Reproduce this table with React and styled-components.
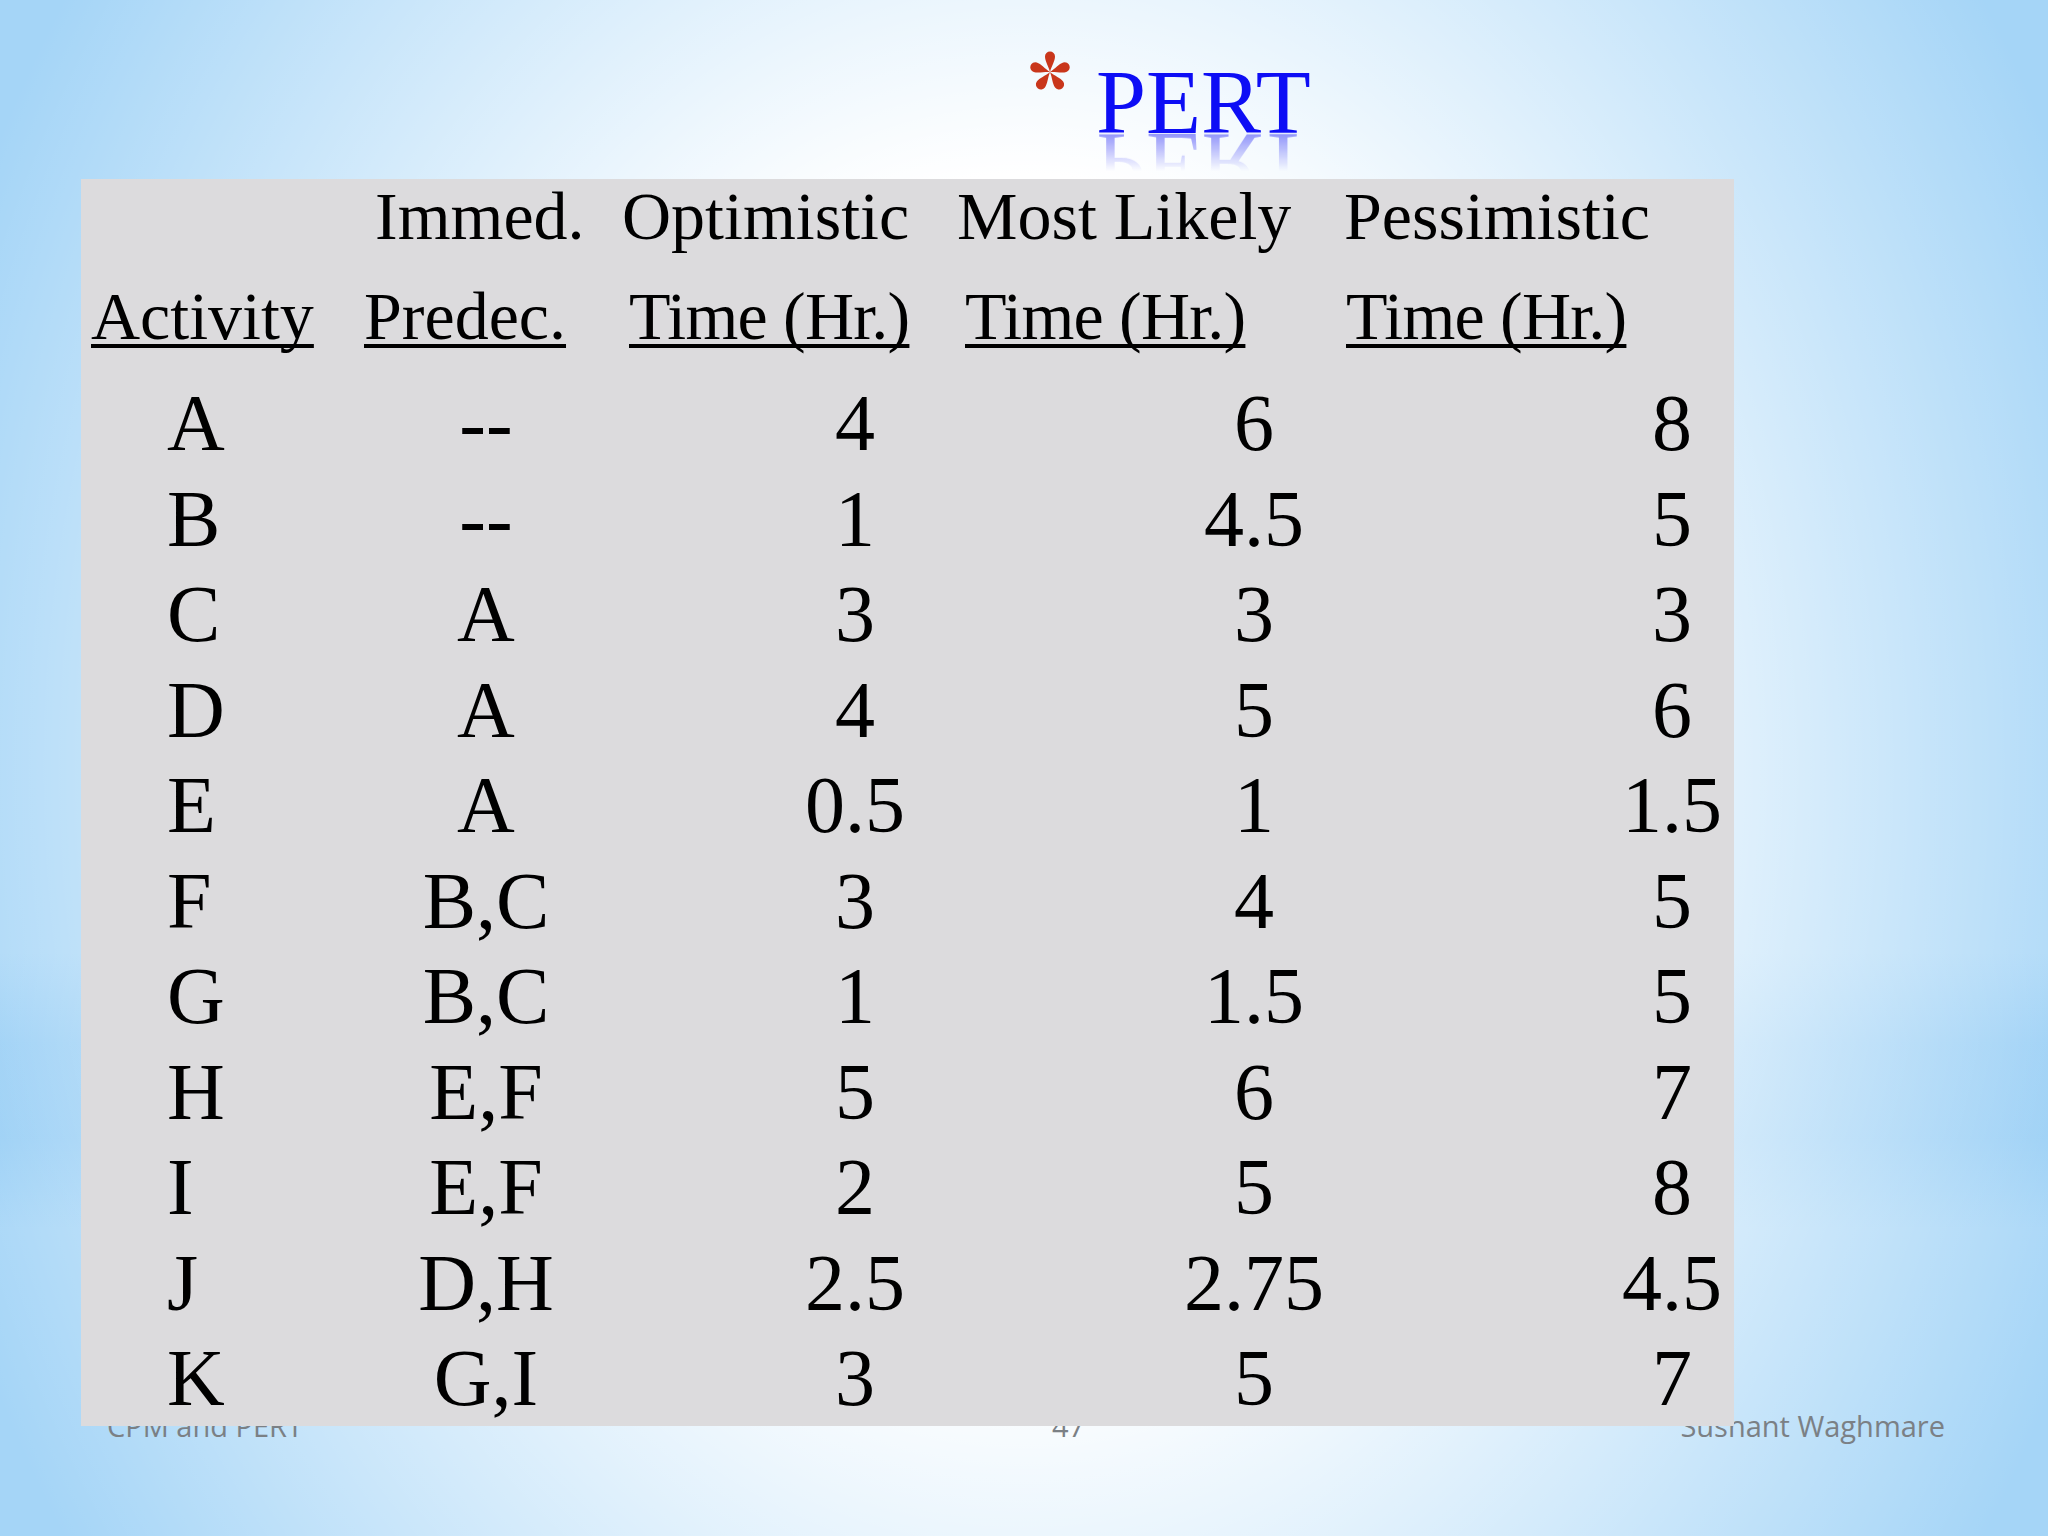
import React from 'react'
import styled, { createGlobalStyle } from 'styled-components'

const GlobalStyle = createGlobalStyle`
  html, body {
    margin: 0;
    padding: 0;
    overflow: hidden;
  }
`

const Slide = styled.div`
  width: 2048px;
  height: 1536px;
  display: flex;
  flex-direction: column;
  overflow: hidden;
  background:
    radial-gradient(ellipse 56% 92% at 50% 50%, #ffffff 42%, rgba(255, 255, 255, 0) 100%),
    linear-gradient(to bottom, rgba(255, 255, 255, 0) 62%, rgba(110, 185, 240, 0.3) 68%, rgba(110, 185, 240, 0.3) 74%, rgba(255, 255, 255, 0) 80%),
    #a5d5f7;
`

const TitleRow = styled.div`
  height: 179px;
  flex-shrink: 0;
  display: flex;
  align-items: flex-start;
  padding-left: 1026px;
`

const Bullet = styled.svg`
  width: 48px;
  height: 48px;
  margin-top: 48px;
  flex-shrink: 0;
`

const Title = styled.h1`
  margin: 58px 0 0 22px;
  font-family: 'Liberation Serif', 'Times New Roman', serif;
  font-weight: normal;
  font-size: 90px;
  line-height: 90px;
  color: #0d0df5;
  -webkit-box-reflect: below -29.2px
    linear-gradient(to bottom, rgba(0, 0, 0, 0) 42%, rgba(0, 0, 0, 0.6));
`

const TableBox = styled.div`
  position: relative;
  z-index: 1;
  flex-shrink: 0;
  margin-left: 81px;
  width: 1653px;
  height: 1247px;
  background: #dcdbdd;
  font-family: 'Liberation Serif', 'Times New Roman', serif;
  color: #000;
`

const HeaderGrid = styled.div`
  display: grid;
  grid-template-columns: 273px 258px 335px 387px 1fr;
  row-gap: 26px;
  padding-left: 10px;
  font-size: 68px;
  line-height: 74px;
  white-space: nowrap;
`

const HeaderCell = styled.div`
  padding-left: ${p => p.$indent || 0}px;
  text-decoration: ${p => (p.$underline ? 'underline' : 'none')};
  text-decoration-thickness: 4px;
  text-underline-offset: 5px;
  text-decoration-skip-ink: none;
  letter-spacing: ${p => (p.$tight ? '-0.8px' : '0')};
`

const DataGrid = styled.div`
  display: grid;
  grid-template-columns: 290px 230px 508px 290px 1fr;
  grid-auto-rows: 95.5px;
  margin-top: 23px;
  font-size: 80px;
  line-height: 95.5px;
  white-space: nowrap;
`

const DataCell = styled.div`
  text-align: ${p => p.$align || 'center'};
  padding-left: ${p => p.$inset || 0}px;
`

const Footer = styled.div`
  margin-top: -15px;
  display: grid;
  grid-template-columns: 945px auto 1fr;
  padding: 0 103px 0 107px;
  font-family: 'Open Sans', 'Liberation Sans', sans-serif;
  font-size: 29px;
  line-height: 29px;
  color: #7b8085;
`

const FooterRight = styled.div`
  text-align: right;
`

const rows = [
  ['A', '--', '4', '6', '8'],
  ['B', '--', '1', '4.5', '5'],
  ['C', 'A', '3', '3', '3'],
  ['D', 'A', '4', '5', '6'],
  ['E', 'A', '0.5', '1', '1.5'],
  ['F', 'B,C', '3', '4', '5'],
  ['G', 'B,C', '1', '1.5', '5'],
  ['H', 'E,F', '5', '6', '7'],
  ['I', 'E,F', '2', '5', '8'],
  ['J', 'D,H', '2.5', '2.75', '4.5'],
  ['K', 'G,I', '3', '5', '7'],
]

function Asterisk() {
  const petal = 'M0,0 C-1.6,-6 -5,-11 -5,-15.5 A5,5 0 0 1 5,-15.5 C5,-11 1.6,-6 0,0 Z'
  return (
    <Bullet viewBox="-24 -24 48 48">
      {[0, 72, 144, 216, 288].map(a => (
        <path key={a} d={petal} fill="#c9361b" transform={`rotate(${a})`} />
      ))}
    </Bullet>
  )
}

export default function App() {
  return (
    <>
      <GlobalStyle />
      <Slide>
        <TitleRow>
          <Asterisk />
          <Title>PERT</Title>
        </TitleRow>

        <TableBox>
          <HeaderGrid>
            <HeaderCell />
            <HeaderCell $indent={11}>Immed.</HeaderCell>
            <HeaderCell>Optimistic</HeaderCell>
            <HeaderCell>Most Likely</HeaderCell>
            <HeaderCell>Pessimistic</HeaderCell>

            <HeaderCell $underline>Activity</HeaderCell>
            <HeaderCell $underline>Predec.</HeaderCell>
            <HeaderCell $underline $tight $indent={7}>Time (Hr.)</HeaderCell>
            <HeaderCell $underline $tight $indent={8}>Time (Hr.)</HeaderCell>
            <HeaderCell $underline $tight $indent={2}>Time (Hr.)</HeaderCell>
          </HeaderGrid>

          <DataGrid>
            {rows.map(([act, pre, opt, likely, pess]) => (
              <React.Fragment key={act}>
                <DataCell $align="left" $inset={86}>{act}</DataCell>
                <DataCell>{pre}</DataCell>
                <DataCell>{opt}</DataCell>
                <DataCell>{likely}</DataCell>
                <DataCell $inset={211}>{pess}</DataCell>
              </React.Fragment>
            ))}
          </DataGrid>
        </TableBox>

        <Footer>
          <div>CPM and PERT</div>
          <div>47</div>
          <FooterRight>Sushant Waghmare</FooterRight>
        </Footer>
      </Slide>
    </>
  )
}
